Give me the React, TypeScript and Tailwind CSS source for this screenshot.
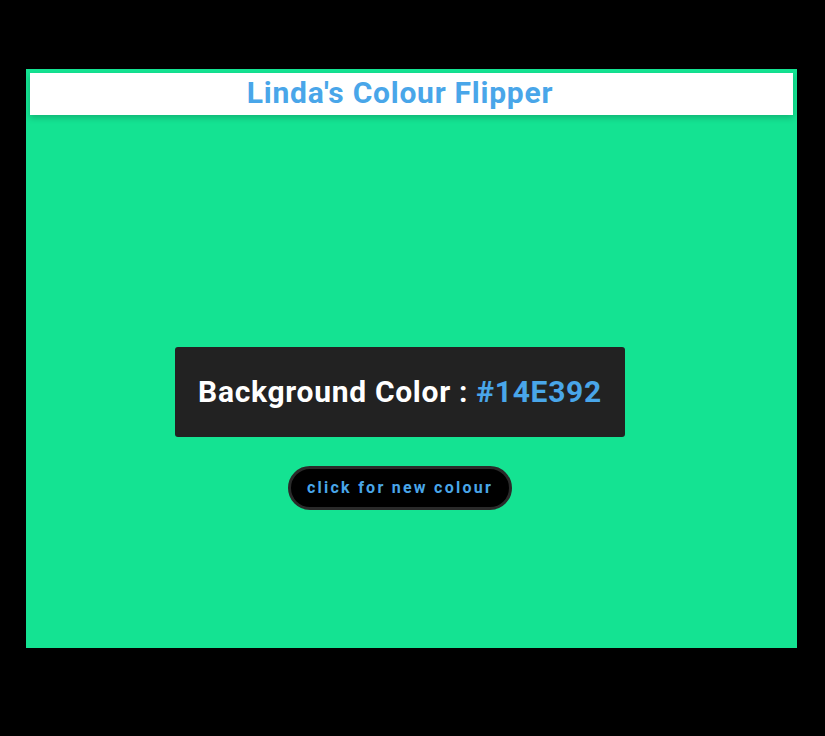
export default function App() {
  return (
    <div className="min-h-[736px] bg-black pt-[69px] pl-[26px] font-['Roboto',sans-serif]">
      <div className="w-[771px] h-[579px] bg-[#14e392] p-1 flex flex-col">
        <nav className="h-[42px] bg-white shadow-[0_3px_6px_rgba(0,0,0,0.2)] flex items-center justify-center pr-[23px] pb-1">
          <h2 className="text-[30px] font-bold text-[#49a6e9] tracking-[0.75px]">Linda's Colour Flipper</h2>
        </nav>
        <main className="flex flex-col items-center pr-[23px] pt-[232px]">
          <div className="w-[450px] h-[90px] bg-[#222] rounded-[3px] flex items-center justify-center pb-[2px]">
            <h2 className="text-[30px] font-bold text-white tracking-[0.7px]">
              Background Color : <span className="text-[#49a6e9]">#14E392</span>
            </h2>
          </div>
          <button className="mt-[29px] w-[224px] h-[44px] bg-black border-[3px] border-[#2a2a2a] rounded-full text-[#49a6e9] font-bold text-[16px] tracking-[2.25px]">
            click for new colour
          </button>
        </main>
      </div>
    </div>
  );
}
